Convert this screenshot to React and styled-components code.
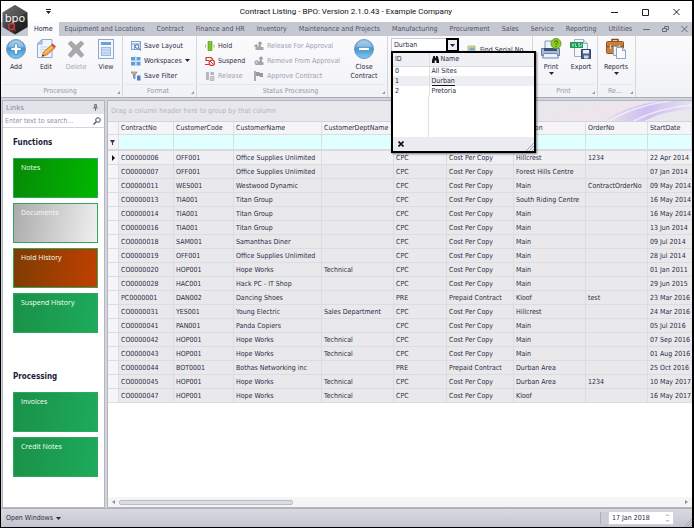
import React, { useState } from 'react'
import styled, { createGlobalStyle, css } from 'styled-components'

const GlobalStyle = createGlobalStyle`
  * { box-sizing: border-box; }
  body {
    margin: 0;
    color: #2b2b45;
    font: 7px/10px "DejaVu Sans Condensed", "DejaVu Sans", sans-serif;
  }
  button, input {
    font: inherit;
    color: inherit;
    margin: 0;
    padding: 0;
    border: 0;
    background: none;
  }
  input { min-width: 0; outline: none; }
  button { cursor: pointer; }
  svg { display: block; flex: none; }
`

const tabs = [
  'Home', 'Equipment and Locations', 'Contract', 'Finance and HR', 'Inventory',
  'Maintenance and Projects', 'Manufacturing', 'Procurement', 'Sales', 'Service',
  'Reporting', 'Utilities',
]

const columns = [
  { title: 'ContractNo', width: 55 },
  { title: 'CustomerCode', width: 60 },
  { title: 'CustomerName', width: 88 },
  { title: 'CustomerDeptName', width: 72 },
  { title: '', width: 53 },
  { title: '', width: 67 },
  { title: 'Location', width: 72 },
  { title: 'OrderNo', width: 62 },
  { title: 'StartDate' },
]

const CPC = ['CPC', 'Cost Per Copy']
const PRE = ['PRE', 'Prepaid Contract']

const contracts = [
  ['CO0000006', 'OFF001', 'Office Supplies Unlimited', '', ...CPC, 'Hillcrest', '1234', '22 Apr 2014'],
  ['CO0000007', 'OFF001', 'Office Supplies Unlimited', '', ...CPC, 'Forest Hills Centre', '', '07 Jan 2014'],
  ['CO0000011', 'WES001', 'Westwood Dynamic', '', ...CPC, 'Main', 'ContractOrderNo', '09 May 2014'],
  ['CO0000013', 'TIA001', 'Titan Group', '', ...CPC, 'South Riding Centre', '', '16 May 2014'],
  ['CO0000014', 'TIA001', 'Titan Group', '', ...CPC, 'Main', '', '16 May 2014'],
  ['CO0000016', 'TIA001', 'Titan Group', '', ...CPC, 'Main', '', '13 Jun 2014'],
  ['CO0000018', 'SAM001', 'Samanthas Diner', '', ...CPC, 'Main', '', '09 Jul 2014'],
  ['CO0000019', 'OFF001', 'Office Supplies Unlimited', '', ...CPC, 'Main', '', '28 Jul 2014'],
  ['CO0000020', 'HOP001', 'Hope Works', 'Technical', ...CPC, 'Main', '', '01 Jan 2011'],
  ['CO0000028', 'HAC001', 'Hack PC - IT Shop', '', ...CPC, 'Main', '', '29 Jun 2015'],
  ['PC0000001', 'DAN002', 'Dancing Shoes', '', ...PRE, 'Kloof', 'test', '23 Mar 2016'],
  ['CO0000031', 'YES001', 'Young Electric', 'Sales Department', ...CPC, 'Hillcrest', '', '24 Mar 2016'],
  ['CO0000041', 'PAN001', 'Panda Copiers', '', ...CPC, 'Main', '', '05 Jul 2016'],
  ['CO0000042', 'HOP001', 'Hope Works', 'Technical', ...CPC, 'Main', '', '07 Sep 2016'],
  ['CO0000043', 'HOP001', 'Hope Works', 'Technical', ...CPC, 'Main', '', '01 Aug 2016'],
  ['CO0000044', 'BOT0001', 'Bothas Networking inc', '', ...PRE, 'Durban Area', '', '25 Oct 2016'],
  ['CO0000045', 'HOP001', 'Hope Works', 'Technical', ...CPC, 'Durban Area', '1234', '10 May 2017'],
  ['CO0000047', 'HOP001', 'Hope Works', 'Technical', ...CPC, 'Kloof', '', '16 May 2017'],
]

const sites = ['All Sites', 'Durban', 'Pretoria']

/* ---------- icons ---------- */

const Caret = () => (
  <svg width="5" height="3" viewBox="0 0 5 3"><path d="M0 0h5L2.500 3z" fill="#26263a" /></svg>
)

const Launcher = () => (
  <svg width="3" height="3" viewBox="0 0 3 3"><path d="M3 0v3H0z" fill="#9a9ca6" /></svg>
)

const Logo = () => (
  <svg width="26" height="30" viewBox="0 0 26 30">
    <defs>
      <linearGradient id="hex" x1="0" y1="0" x2="1" y2="1">
        <stop offset="0" stopColor="#777" />
        <stop offset=".5" stopColor="#3b3b3d" />
        <stop offset="1" stopColor="#222" />
      </linearGradient>
    </defs>
    <path d="M13 0l12.5 7.500v14.500L13 29.500.5 22V7.500z" fill="url(#hex)" />
    <path d="M13 0l12.500 7.500L13 13 .5 7.500z" fill="#666" opacity=".5" />
    <path d="M13 18v11.500L25.500 22v-8z" fill="#111" opacity=".4" />
    <text x="13" y="17" textAnchor="middle" fontSize="11" fontFamily="DejaVu Sans" fill="#f4f4f4">bpo</text>
    <circle cx="9.500" cy="21.500" r="3" fill="none" stroke="#d23a34" strokeWidth="1.300" />
    <path d="M12 23.500l1.500 2.500" stroke="#d23a34" />
  </svg>
)

const Disc = ({ plus }) => (
  <svg width="22" height="22" viewBox="0 0 22 22">
    <defs>
      <linearGradient id="disc" x1="0" y1="0" x2="0" y2="1">
        <stop offset="0" stopColor="#9cc6e8" />
        <stop offset=".5" stopColor="#4795d1" />
        <stop offset="1" stopColor="#7ccbf2" />
      </linearGradient>
    </defs>
    <circle cx="11" cy="11" r="9.500" fill="url(#disc)" stroke="#6f9cc2" />
    <path d="M3.500 9a7.500 6 0 0 1 15 0q-7.500 3-15 0z" fill="#fff" opacity=".25" />
    {plus
      ? <path d="M9.500 6h3v3.500H16v3h-3.500V16h-3v-3.500H6v-3h3.500z" fill="#fff" stroke="#3a78b0" strokeWidth=".6" />
      : <rect x="5.500" y="9.500" width="11" height="3" fill="#fff" stroke="#3a78b0" strokeWidth=".6" />}
  </svg>
)

const EditIcon = () => (
  <svg width="22" height="22" viewBox="0 0 22 22">
    <path d="M7 1.500h10v18H2.500V6z" fill="#f0f5fd" stroke="#8fa9d4" />
    <path d="M7 1.500V6H2.500z" fill="#b9cdec" stroke="#8fa9d4" />
    <path d="M5 9h10M5 11.500h9M5 14h5" stroke="#c9d8ef" />
    <path d="M7 18.500l1.500-4.500 8-7 3.500 3-8 7z" fill="#f0a23a" stroke="#a9631e" strokeWidth=".6" />
    <path d="M9.500 15.500l8-7" stroke="#ffe08d" />
    <path d="M16 7l1.500-1.500 3.500 3-1.500 1.500z" fill="#c64a3b" />
    <path d="M7 18.500l.8-2.300 1.400 1.500z" fill="#333" />
  </svg>
)

const DeleteIcon = () => (
  <svg width="22" height="22" viewBox="0 0 22 22">
    <path d="M3 5.500L6 3l5 4.500L16 3l3 2.500-5 5.500 5 6-3 2.500-5-5-5 5L3 17l5-6z" fill="#a9a9a9" stroke="#969696" strokeWidth=".5" />
  </svg>
)

const ViewIcon = () => (
  <svg width="22" height="22" viewBox="0 0 22 22">
    <rect x="3.500" y="1.500" width="15" height="19" fill="#f3f7fd" stroke="#8ea8cb" />
    <rect x="6" y="4" width="10" height="3" fill="#6f9fd8" />
    <rect x="6.500" y="9.500" width="9" height="8" fill="#cddff5" stroke="#9cb9e0" />
    <path d="M6 12h10M6 15h10" stroke="#9cb9e0" strokeWidth=".7" />
  </svg>
)

const PrintIcon = () => (
  <svg width="22" height="22" viewBox="0 0 22 22">
    <path d="M5 3h10v8H5z" fill="#eef3fa" stroke="#8095b5" />
    <path d="M1.500 10.500h18v7h-18z" fill="#a9bad6" stroke="#667a9f" />
    <path d="M4 10h13v3H4z" fill="#3d5179" />
    <path d="M4 15.500h13l1.500 4.500h-16z" fill="#edf3fc" stroke="#6e86ad" />
    <circle cx="16" cy="5.500" r="5" fill="#8fca27" stroke="#65a014" />
    <path d="M14.500 4.500q0-1.700 1.600-1.700 1.700 0 1.700 1.500 0 1-1.600 1.700v1M16.100 8v1" fill="none" stroke="#31640b" />
  </svg>
)

const ExportIcon = () => (
  <svg width="22" height="22" viewBox="0 0 22 22">
    <path d="M4.500 1.500h9l4 4v13h-13z" fill="#f5f8fb" stroke="#9aaec0" />
    <path d="M13.500 1.500v4h4" fill="#dae4ee" stroke="#9aaec0" />
    <rect x="0" y="4" width="13" height="6" fill="#1d9a55" />
    <path d="M2 5.500l2 3m0-3l-2 3M5.500 5.500v3h1.500M10 5.500H8.500v1.500H10v1.500H8.500M11.500 5.500v3" fill="none" stroke="#d6f3e2" strokeWidth=".7" />
    <path d="M11.500 11.500h9v9h-9z" fill="#4a6089" stroke="#324468" />
    <rect x="13" y="12" width="6" height="3.500" fill="#e7edf6" />
    <rect x="14" y="17.500" width="4.500" height="3" fill="#cfd9e8" />
  </svg>
)

const ReportsIcon = () => (
  <svg width="22" height="22" viewBox="0 0 22 22">
    <path d="M7 4V1.500h6V4" fill="none" stroke="#7d4a22" strokeWidth="1.500" />
    <rect x="1.500" y="3.500" width="17" height="12" rx="1" fill="#c8803f" stroke="#93561f" />
    <path d="M2 8.500h16" stroke="#8a4d1b" strokeWidth="1.500" />
    <path d="M5.500 7v4M14.500 7v4" stroke="#f0cf8c" strokeWidth="1.500" />
    <path d="M8.500 8.500h5v9h-5z" fill="#eef2fa" stroke="#8fa3c7" />
    <path d="M11.500 9.500h6l3 3v8h-9z" fill="#fbfcff" stroke="#8fa3c7" />
    <path d="M17.500 9.500v3h3" fill="#d9e3f4" stroke="#8fa3c7" />
  </svg>
)

// small 10px ribbon glyphs
const glyphs = {
  layout: <><rect x=".5" y=".5" width="9" height="8" fill="#e9f1fb" stroke="#7ba3d6" /><path d="M1 3h8M3.500 3v5" stroke="#7ba3d6" /><circle cx="6" cy="5.500" r="1.800" fill="#fff" stroke="#3f6fae" /><path d="M7.500 7l2 2.500" stroke="#3f6fae" /></>,
  workspaces: <><path d="M0 1h4v3.500H0zM5.500 1h4v3.500h-4zM0 6h4v3.500H0zM5.500 6h4v3.500h-4z" fill="#5f9edb" /><path d="M0 5.200h10M4.700 0v10" stroke="#b9d5f0" /></>,
  filter: <><path d="M0 1h6L4 4v4L2.500 7V4z" fill="#8fa3c4" stroke="#5b6f96" strokeWidth=".6" /><path d="M6 4.500h3.500v5H6z" fill="#4d7fc4" /><path d="M1 2h4" stroke="#f0b44a" /></>,
  hold: <><path d="M3 .5h4v9H3z" fill="#7cc52c" stroke="#4f9415" strokeWidth=".6" /><path d="M.5 3.500v3M9 3.500v3" stroke="#9bbf78" /></>,
  suspend: <><path d="M1 1.500h5l2 2M1 1.500v3h3" fill="none" stroke="#c8342c" strokeWidth="1.200" /><circle cx="6.800" cy="6.800" r="2.700" fill="#fff" stroke="#d2382f" strokeWidth="1.200" /><path d="M0 8.500h4M5 5l3.500 3.500" stroke="#d2382f" /></>,
  release: <><path d="M1 1h3v8H1zM5.500 1H9v3H5.500z" fill="#b6b6bb" /><path d="M5.500 5.500H9v4H5.500z" fill="#cacace" stroke="#a5a5aa" strokeWidth=".6" /></>,
  stampUp: <><circle cx="6" cy="2.200" r="1.700" fill="#9c9ca2" /><path d="M5 3.500h2V6h2.500v3H1.500V7L4 6z" fill="#a5a5ab" /><path d="M0 5h4M2.200 3v4" stroke="#8d8d93" /></>,
  stampDown: <><circle cx="7" cy="2.200" r="1.700" fill="#9c9ca2" /><path d="M6 3.500h2V6h1.500v3h-8V6H5z" fill="#a5a5ab" /><circle cx="2.800" cy="6.500" r="2" fill="#c2c2c7" stroke="#8d8d93" strokeWidth=".6" /></>,
  flag: <><path d="M1 0v10" stroke="#77777d" strokeWidth="1.200" /><path d="M2 1h3l1 1h3v4H6L5 5H2z" fill="#98989e" /></>,
  find: <><path d="M1 1h7v8H1z" fill="#d8e6a4" stroke="#a6b54c" strokeWidth=".8" /><path d="M2.500 2.500h5v3h-5z" fill="#7aa7d9" /></>,
}

const Glyph = ({ name }) => <svg width="10" height="10" viewBox="0 0 10 10">{glyphs[name]}</svg>

const windowShapes = {
  Minimize: 'M0 4.500h7',
  Maximize: 'M.5 1.500h6v6h-6z',
  Restore: 'M.5 3.500h4v3h-4zM2.500 3V1.500h4v3H5',
  Close: 'M.5 1l6 6M6.500 1l-6 6',
}

function WindowButtons({ names, color }) {
  return names.map((name) => (
    <WindowButton key={name} aria-label={name}>
      <svg width="7" height="8" viewBox="0 0 7 8"><path d={windowShapes[name]} fill="none" stroke={color} /></svg>
    </WindowButton>
  ))
}

/* ---------- parts ---------- */

function BigCommand({ icon, label, disabled, menu, wide }) {
  return (
    <BigButton disabled={disabled} $wide={wide}>
      {icon}
      <span>{label}</span>
      {menu && <Caret />}
    </BigButton>
  )
}

function SmallCommand({ icon, label, disabled, menu }) {
  return (
    <SmallButton disabled={disabled}>
      <Glyph name={icon} />
      <span>{label}</span>
      {menu && <Caret />}
    </SmallButton>
  )
}

function RibbonGroup({ title, width, flush, children }) {
  return (
    <Group $width={width}>
      <GroupBody $flush={flush}>{children}</GroupBody>
      {title && <GroupTitle><span>{title}</span><Launcher /></GroupTitle>}
    </Group>
  )
}

function SitePicker({ site, setSite }) {
  return (
    <Combo>
      <ComboInput aria-label="Site" value={site} readOnly />
      <ComboButton aria-label="Show sites"><Caret /></ComboButton>
      <Popup>
        <SiteTable>
          <thead>
            <tr>
              <th>ID</th>
              <th>
                <NameHead>
                  <svg width="7" height="7" viewBox="0 0 8 8"><path d="M1.500 0h2v2h1V0h2L8 5v3H5V5H3v3H0V5z" fill="#111" /></svg>
                  Name
                </NameHead>
              </th>
            </tr>
          </thead>
          <tbody>
            {sites.map((name, i) => (
              <SiteRow key={name} $active={name === site} onClick={() => setSite(name)}>
                <td>{i}</td>
                <td><span>{name}</span></td>
              </SiteRow>
            ))}
          </tbody>
        </SiteTable>
        <PopupRest />
        <PopupFoot>
          <button aria-label="Close list">
            <svg width="6" height="6" viewBox="0 0 6 6"><path d="M.5.5l5 5M5.500.5l-5 5" stroke="#111" strokeWidth="1.600" /></svg>
          </button>
          <Grip />
        </PopupFoot>
      </Popup>
    </Combo>
  )
}

const Grip = () => (
  <svg width="8" height="8" viewBox="0 0 8 8"><path d="M0 8l8-8M3 8l5-5M6 8l2-2" stroke="#a3a5ae" /></svg>
)

function LinksPanel() {
  return (
    <Links>
      <LinksHead>
        Links
        <svg width="5" height="7" viewBox="0 0 5 7"><path d="M1.500.5h2v3h-2zM0 4h5M2.500 4v3" fill="#a5a7b4" stroke="#777a88" /></svg>
      </LinksHead>
      <Search>
        <input aria-label="Search links" placeholder="Enter text to search..." />
        <svg width="8" height="8" viewBox="0 0 8 8"><circle cx="5" cy="3" r="2.300" fill="none" stroke="#44465a" /><path d="M3.300 4.700L.5 7.500" stroke="#44465a" strokeWidth="1.200" /></svg>
      </Search>
      <LinkGroup>
        <h2>Functions</h2>
        <Tile href="#notes" $tone="notes">Notes</Tile>
        <Tile href="#documents" $tone="documents">Documents</Tile>
        <Tile href="#hold" $tone="hold">Hold History</Tile>
        <Tile href="#suspend">Suspend History</Tile>
      </LinkGroup>
      <LinkGroup>
        <h2>Processing</h2>
        <Tile href="#invoices">Invoices</Tile>
        <Tile href="#credit">Credit Notes</Tile>
      </LinkGroup>
    </Links>
  )
}

function ContractGrid() {
  return (
    <GridPanel>
      <GroupBar>
        <span>Drag a column header here to group by that column</span>
        <svg width="160" height="21" viewBox="0 0 160 21" preserveAspectRatio="none">
          <defs>
            <linearGradient id="swoosh" x1="0" x2="1">
              <stop offset="0" stopColor="#c9b8ee" stopOpacity="0" />
              <stop offset=".5" stopColor="#cdbff0" />
              <stop offset="1" stopColor="#e6e0f3" />
            </linearGradient>
          </defs>
          <path d="M0 21Q60 0 100 0h20Q90 8 72 21z" fill="#f2dfec" opacity=".5" />
          <path d="M70 21Q95 4 130 0h30v8q-30 2-50 13z" fill="url(#swoosh)" />
          <path d="M76 21Q100 5 138 0M100 21Q125 7 160 4" fill="none" stroke="#fff" strokeWidth="1.500" opacity=".6" />
        </svg>
      </GroupBar>
      <Table>
        <colgroup>
          <col style={{ width: 11 }} />
          {columns.map((c, i) => <col key={i} style={{ width: c.width }} />)}
        </colgroup>
        <thead>
          <tr>
            <th />
            {columns.map((c, i) => <th key={i}>{c.title}</th>)}
          </tr>
          <FilterRow>
            <td><svg width="5" height="5" viewBox="0 0 5 5"><path d="M0 0h5L3 3v2H2V3z" fill="#33354a" /></svg></td>
            {columns.map((c, i) => <td key={i} />)}
          </FilterRow>
        </thead>
        <tbody>
          {contracts.map((row, i) => (
            <Row key={row[0]} $focused={i === 0}>
              <td>{i === 0 && <svg width="3" height="6" viewBox="0 0 3 6"><path d="M0 0l3 3-3 3z" fill="#111" /></svg>}</td>
              {row.map((cell, j) => <td key={j}>{cell}</td>)}
            </Row>
          ))}
        </tbody>
      </Table>
      <GridRest />
      <ScrollBar>
        <svg width="3" height="4" viewBox="0 0 3 4"><path d="M3 0v4L0 2z" fill="#8b8d99" /></svg>
        <Track><Thumb /></Track>
        <svg width="3" height="4" viewBox="0 0 3 4"><path d="M0 0v4l3-2z" fill="#8b8d99" /></svg>
      </ScrollBar>
    </GridPanel>
  )
}

function App() {
  const [tab, setTab] = useState('Home')
  const [site, setSite] = useState('Durban')

  return (
    <>
      <GlobalStyle />
      <Window>
        <LogoSpot><Logo /></LogoSpot>
        <TitleBar>
          <QuickAccess aria-label="Customize quick access">
            <svg width="5" height="5" viewBox="0 0 5 5"><path d="M0 0h5v1H0zM0 2h5L2.500 5z" fill="#222" /></svg>
          </QuickAccess>
          <h1>Contract Listing - BPO: Version 2.1.0.43 - Example Company</h1>
          <WindowControls $gap={24}><WindowButtons names={['Minimize', 'Maximize', 'Close']} color="#222" /></WindowControls>
        </TitleBar>
        <TabBar>
          {tabs.map((t) => <Tab key={t} $active={t === tab} onClick={() => setTab(t)}>{t}</Tab>)}
          <WindowControls $gap={12}><WindowButtons names={['Minimize', 'Restore', 'Close']} color="#666a7c" /></WindowControls>
        </TabBar>

        <Ribbon>
          <RibbonGroup title="Processing" width={122} flush>
            <BigCommand icon={<Disc plus />} label="Add" />
            <BigCommand icon={<EditIcon />} label="Edit" />
            <BigCommand icon={<DeleteIcon />} label="Delete" disabled />
            <BigCommand icon={<ViewIcon />} label="View" />
          </RibbonGroup>
          <RibbonGroup title="Format" width={74}>
            <Stack $width={70}>
              <SmallCommand icon="layout" label="Save Layout" />
              <SmallCommand icon="workspaces" label="Workspaces" menu />
              <SmallCommand icon="filter" label="Save Filter" />
            </Stack>
          </RibbonGroup>
          <RibbonGroup title="Status Processing" width={191}>
            <Stack $width={49}>
              <SmallCommand icon="hold" label="Hold" />
              <SmallCommand icon="suspend" label="Suspend" />
              <SmallCommand icon="release" label="Release" disabled />
            </Stack>
            <Stack $width={95}>
              <SmallCommand icon="stampUp" label="Release For Approval" disabled />
              <SmallCommand icon="stampDown" label="Remove From Approval" disabled />
              <SmallCommand icon="flag" label="Approve Contract" disabled />
            </Stack>
            <BigCommand icon={<Disc />} label="Close Contract" wide />
          </RibbonGroup>
          <RibbonGroup width={145}>
            <SitePicker site={site} setSite={setSite} />
            <FindSpot><SmallCommand icon="find" label="Find Serial No" /></FindSpot>
          </RibbonGroup>
          <RibbonGroup title="Print" width={65}>
            <BigCommand icon={<PrintIcon />} label="Print" menu />
            <BigCommand icon={<ExportIcon />} label="Export" />
          </RibbonGroup>
          <RibbonGroup title="Re..." width={38}>
            <BigCommand icon={<ReportsIcon />} label="Reports" menu />
          </RibbonGroup>
        </Ribbon>

        <Body>
          <LinksPanel />
          <ContractGrid />
        </Body>

        <StatusBar>
          <OpenWindows>Open Windows <Caret /></OpenWindows>
          <DateBox>
            <input aria-label="Date" defaultValue="17 Jan 2018" />
            <svg width="5" height="10" viewBox="0 0 5 10"><path d="M0 3l2.500-2L5 3zM0 7l2.500 2L5 7z" fill="#c4c6cf" /></svg>
          </DateBox>
          <Grip />
        </StatusBar>
      </Window>
    </>
  )
}

/* ---------- styles ---------- */

const Window = styled.div`
  position: relative;
  min-height: 100vh;
  display: flex;
  flex-direction: column;
  border: 1px solid #000;
  border-right-width: 2px;
  background: #d3d5dc;
  overflow: hidden;
`

const LogoSpot = styled.div`
  position: absolute;
  left: 1px;
  top: 4px;
`

const TitleBar = styled.header`
  height: 21px;
  display: flex;
  align-items: center;
  padding-right: 12px;
  background: #fff;

  h1 {
    flex: 1;
    margin: 0;
    padding-left: 30px;
    text-align: center;
    font: 8px/12px Roboto, sans-serif;
    color: #111;
  }
`

const QuickAccess = styled.button`
  margin-left: 45px;
`

const WindowControls = styled.div`
  display: flex;
  align-items: center;
  gap: ${(p) => p.$gap}px;
  margin-left: auto;
`

const WindowButton = styled.button`
  width: 7px;
`

const TabBar = styled.nav`
  height: 14px;
  display: flex;
  padding: 0 4px 0 27px;
  background: #c6c8d1;
`

const Tab = styled.button`
  padding: 0 6px;
  white-space: nowrap;
  color: ${(p) => (p.$active ? '#24243c' : '#50526a')};
  background: ${(p) => (p.$active ? '#fbfbfd' : 'transparent')};
`

const Ribbon = styled.div`
  height: 62px;
  display: flex;
  background: linear-gradient(#fbfbfd, #f1f2f6);
  border-bottom: 1px solid #a9abb6;
`

const Group = styled.section`
  width: ${(p) => p.$width}px;
  flex: none;
  display: flex;
  flex-direction: column;
  border-right: 1px solid #d5d7df;
`

const GroupBody = styled.div`
  flex: 1;
  display: flex;
  align-items: flex-start;
  padding: 2px 0 0 ${(p) => (p.$flush ? '0' : '3px')};
`

const GroupTitle = styled.div`
  height: 13px;
  margin: 0 2px;
  display: flex;
  align-items: center;
  border-top: 1px solid #e4e5eb;
  color: #9698a6;

  span {
    flex: 1;
    text-align: center;
  }
  svg {
    align-self: flex-end;
    margin-bottom: 3px;
  }
`

const BigButton = styled.button`
  width: ${(p) => (p.$wide ? '40px' : '30px')};
  display: flex;
  flex-direction: column;
  align-items: center;
  line-height: 9px;
  flex: none;

  span { padding-top: 3px; }

  &:disabled {
    color: #a9abb5;
  }
`

const Stack = styled.div`
  width: ${(p) => p.$width}px;
  display: flex;
  flex-direction: column;
  flex: none;
`

const SmallButton = styled.button`
  height: 15px;
  display: flex;
  align-items: center;
  gap: 3px;
  padding-left: 5px;
  white-space: nowrap;

  &:disabled {
    color: #a0a2ad;
  }
`

const Combo = styled.div`
  position: relative;
  width: 68px;
  height: 14px;
  display: flex;
  background: #fff;
  border: 1px solid #c5c8d2;
  z-index: 2;
`

const ComboInput = styled.input`
  flex: 1;
  padding-left: 2px;
`

const ComboButton = styled.button`
  width: 13px;
  margin: -1px;
  display: flex;
  align-items: center;
  justify-content: center;
  border: 2px solid #000;
  background: #eceef2;
`

const Popup = styled.div`
  position: absolute;
  left: -1px;
  top: 12px;
  width: 145px;
  height: 102px;
  display: flex;
  flex-direction: column;
  background: #fff;
  border: 2px solid #000;
  box-shadow: 1px 1px 2px rgba(0, 0, 0, 0.5);
`

const SiteTable = styled.table`
  width: 100%;
  table-layout: fixed;
  border-collapse: collapse;

  th, td {
    height: 10px;
    padding: 0 2px;
    text-align: left;
    font-weight: normal;
    line-height: 9px;
  }
  th {
    height: 13px;
    background: #eff0f3;
    border-bottom: 1px solid #d9dbe1;
  }
  th:first-child, td:first-child {
    width: 36px;
    border-right: 1px solid #dddfe5;
  }
`

const NameHead = styled.span`
  display: flex;
  align-items: center;
  gap: 2px;
`

const SiteRow = styled.tr`
  cursor: pointer;
  ${(p) => p.$active && css`
    background: #eceef1;
    span { border-bottom: 1px solid #111; }
  `}
`

const PopupRest = styled.div`
  flex: 1;
  width: 36px;
  border-right: 1px solid #dddfe5;
`

const PopupFoot = styled.div`
  height: 14px;
  display: flex;
  align-items: center;
  justify-content: space-between;
  padding-left: 5px;
  background: #ebecf0;

  > svg { align-self: flex-end; }
`

const FindSpot = styled.div`
  padding: 4px 0 0 3px;
`

const Body = styled.main`
  flex: 1;
  display: flex;
  gap: 2px;
  padding: 2px 0 0 1px;
`

const Links = styled.aside`
  width: 103px;
  flex: none;
  background: #fff;
  border: 1px solid #b3b5bf;
`

const LinksHead = styled.div`
  height: 13px;
  display: flex;
  align-items: center;
  justify-content: space-between;
  padding: 0 6px 0 3px;
  background: #e2e4e9;
  color: #8486a0;
  font-family: "DejaVu Sans", sans-serif;
`

const Search = styled.div`
  height: 14px;
  display: flex;
  align-items: center;
  padding: 0 3px 0 2px;
  border-bottom: 1px solid #d3d5dc;

  input { flex: 1; }
  input::placeholder { color: #9092a0; }
`

const LinkGroup = styled.nav`
  padding: 9px 6px 0 10px;
  display: flex;
  flex-direction: column;
  gap: 5px;

  & + & { padding-top: 38px; }

  h2 {
    margin: 0 0 4px;
    font-size: 8px;
    line-height: 12px;
    color: #1d1d3a;
  }
`

const tones = {
  notes: 'linear-gradient(100deg, #078a07, #00b800)',
  documents: 'linear-gradient(100deg, #ababab, #f0f0f0)',
  hold: 'linear-gradient(100deg, #7d3c02, #c14000)',
  plain: 'linear-gradient(100deg, #1a9148, #1dab5c)',
}

const Tile = styled.a`
  height: 40px;
  padding: 4px 7px;
  border: 1px solid #2fa85c;
  background: ${(p) => tones[p.$tone || 'plain']};
  color: #f4fff6;
  font: 7px/10px "Open Sans", sans-serif;
  text-decoration: none;
`

const GridPanel = styled.section`
  flex: 1;
  min-width: 0;
  display: flex;
  flex-direction: column;
  background: #fff;
  border: 1px solid #b3b5bf;
  border-right: 0;
`

const GroupBar = styled.div`
  height: 20px;
  display: flex;
  align-items: center;
  justify-content: space-between;
  padding-left: 3px;
  background: #e8e8ec;
  color: #b4b5bd;
  overflow: hidden;
`

const Table = styled.table`
  width: 100%;
  table-layout: fixed;
  border-collapse: separate;
  border-spacing: 0;

  th, td {
    height: 14px;
    padding: 0 0 0 2px;
    overflow: hidden;
    white-space: nowrap;
    text-align: left;
    font-weight: normal;
    border-right: 1px solid #dcdde2;
    border-bottom: 1px solid #dcdde2;
  }
  th {
    background: #f5f5f8;
    border-top: 1px solid #d2d4db;
  }
`

const FilterRow = styled.tr`
  td {
    height: 16px;
    background: #e0ffff;
    border-bottom: 2px solid #d9dae0;
  }
  td:first-child { background: #f5f5f8; }
`

const Row = styled.tr`
  background: ${(p) => (p.$focused ? '#f0f0f3' : '#e9e9eb')};

  td:first-child {
    padding-left: 4px;
    background: #f5f5f8;
  }
  td:last-child {
    border-right: 0;
  }
`

const GridRest = styled.div`
  flex: 1;
`

const ScrollBar = styled.div`
  height: 10px;
  display: flex;
  align-items: center;
  gap: 4px;
  padding: 0 4px;
  background: #f5f5f7;
`

const Track = styled.div`
  flex: 1;
`

const Thumb = styled.div`
  width: 31%;
  height: 5px;
  border: 1px solid #b9bbc6;
  border-radius: 2px;
  background: #dcdde4;
`

const StatusBar = styled.footer`
  height: 19px;
  display: flex;
  align-items: center;
  padding-left: 5px;
  background: linear-gradient(#d9dae0, #c3c5ce);
  border-top: 1px solid #aeb0bb;

  > svg { align-self: flex-end; }
`

const OpenWindows = styled.button`
  display: flex;
  align-items: center;
  gap: 3px;
`

const DateBox = styled.div`
  width: 66px;
  height: 14px;
  margin: 0 10px 0 auto;
  display: flex;
  align-items: center;
  padding: 0 3px;
  background: #fff;
  border: 1px solid #d0d2da;
  box-shadow: -8px 0 0 -1px #cbcdd5, -9px 0 0 -1px #aaacb6;

  input { flex: 1; }
`

export default App
